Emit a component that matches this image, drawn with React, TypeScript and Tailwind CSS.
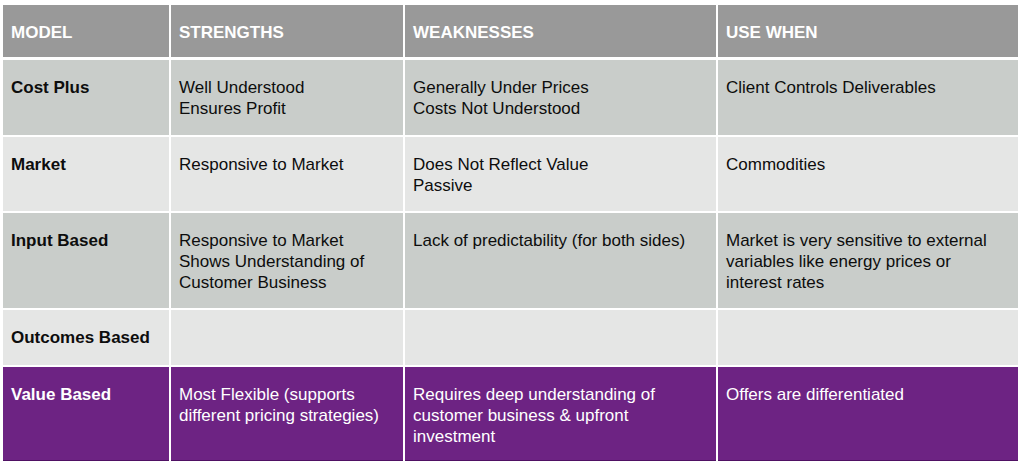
const rows = [
  {
    model: 'Cost Plus',
    strengths: ['Well Understood', 'Ensures Profit'],
    weaknesses: ['Generally Under Prices', 'Costs Not Understood'],
    useWhen: ['Client Controls Deliverables'],
    height: 'h-[75px]',
    tone: 'dark',
  },
  {
    model: 'Market',
    strengths: ['Responsive to Market'],
    weaknesses: ['Does Not Reflect Value', 'Passive'],
    useWhen: ['Commodities'],
    height: 'h-[74px]',
    tone: 'light',
  },
  {
    model: 'Input Based',
    strengths: ['Responsive to Market', 'Shows Understanding of', 'Customer Business'],
    weaknesses: ['Lack of predictability (for both sides)'],
    useWhen: ['Market is very sensitive to external', 'variables like energy prices or', 'interest rates'],
    height: 'h-[95px]',
    tone: 'dark',
  },
  {
    model: 'Outcomes Based',
    strengths: [],
    weaknesses: [],
    useWhen: [],
    height: 'h-[55px]',
    tone: 'light',
  },
  {
    model: 'Value Based',
    strengths: ['Most Flexible (supports', 'different pricing strategies)'],
    weaknesses: ['Requires deep understanding of', 'customer business & upfront', 'investment'],
    useWhen: ['Offers are differentiated'],
    height: 'h-[94px]',
    tone: 'purple',
  },
]

const toneClass: Record<string, string> = {
  dark: 'bg-[#c9cdca] text-[#0d0d0d]',
  light: 'bg-[#e5e6e5] text-[#0d0d0d]',
  purple: 'bg-[#6d2383] text-white border-b border-[#4f1163]',
}

function Lines({ lines }: { lines: string[] }) {
  return (
    <>
      {lines.map((l) => (
        <div key={l} className="whitespace-nowrap">{l}</div>
      ))}
    </>
  )
}

export default function App() {
  return (
    <div
      className="w-[1024px] h-[467px] bg-white pt-[5px] pl-[3px] overflow-hidden"
      style={{ fontFamily: '"Liberation Sans", Arial, sans-serif' }}
    >
      <div className="flex flex-col gap-[2px] w-[1015px] text-[17px] leading-[21px]">
        <div className="grid grid-cols-[166px_232px_311px_300px] gap-x-[2px] h-[52px] mb-[1px] text-white font-bold">
          {['MODEL', 'STRENGTHS', 'WEAKNESSES', 'USE WHEN'].map((h) => (
            <div key={h} className="bg-[#999999] px-2 pt-[17px]">{h}</div>
          ))}
        </div>
        {rows.map((r) => (
          <div
            key={r.model}
            className={`grid grid-cols-[166px_232px_311px_300px] gap-x-[2px] ${r.height}`}
          >
            <div className={`${toneClass[r.tone]} px-2 pt-[17px] font-bold`}>{r.model}</div>
            <div className={`${toneClass[r.tone]} px-2 pt-[17px]`}>
              <Lines lines={r.strengths} />
            </div>
            <div className={`${toneClass[r.tone]} px-2 pt-[17px]`}>
              <Lines lines={r.weaknesses} />
            </div>
            <div className={`${toneClass[r.tone]} px-2 pt-[17px]`}>
              <Lines lines={r.useWhen} />
            </div>
          </div>
        ))}
      </div>
    </div>
  )
}
